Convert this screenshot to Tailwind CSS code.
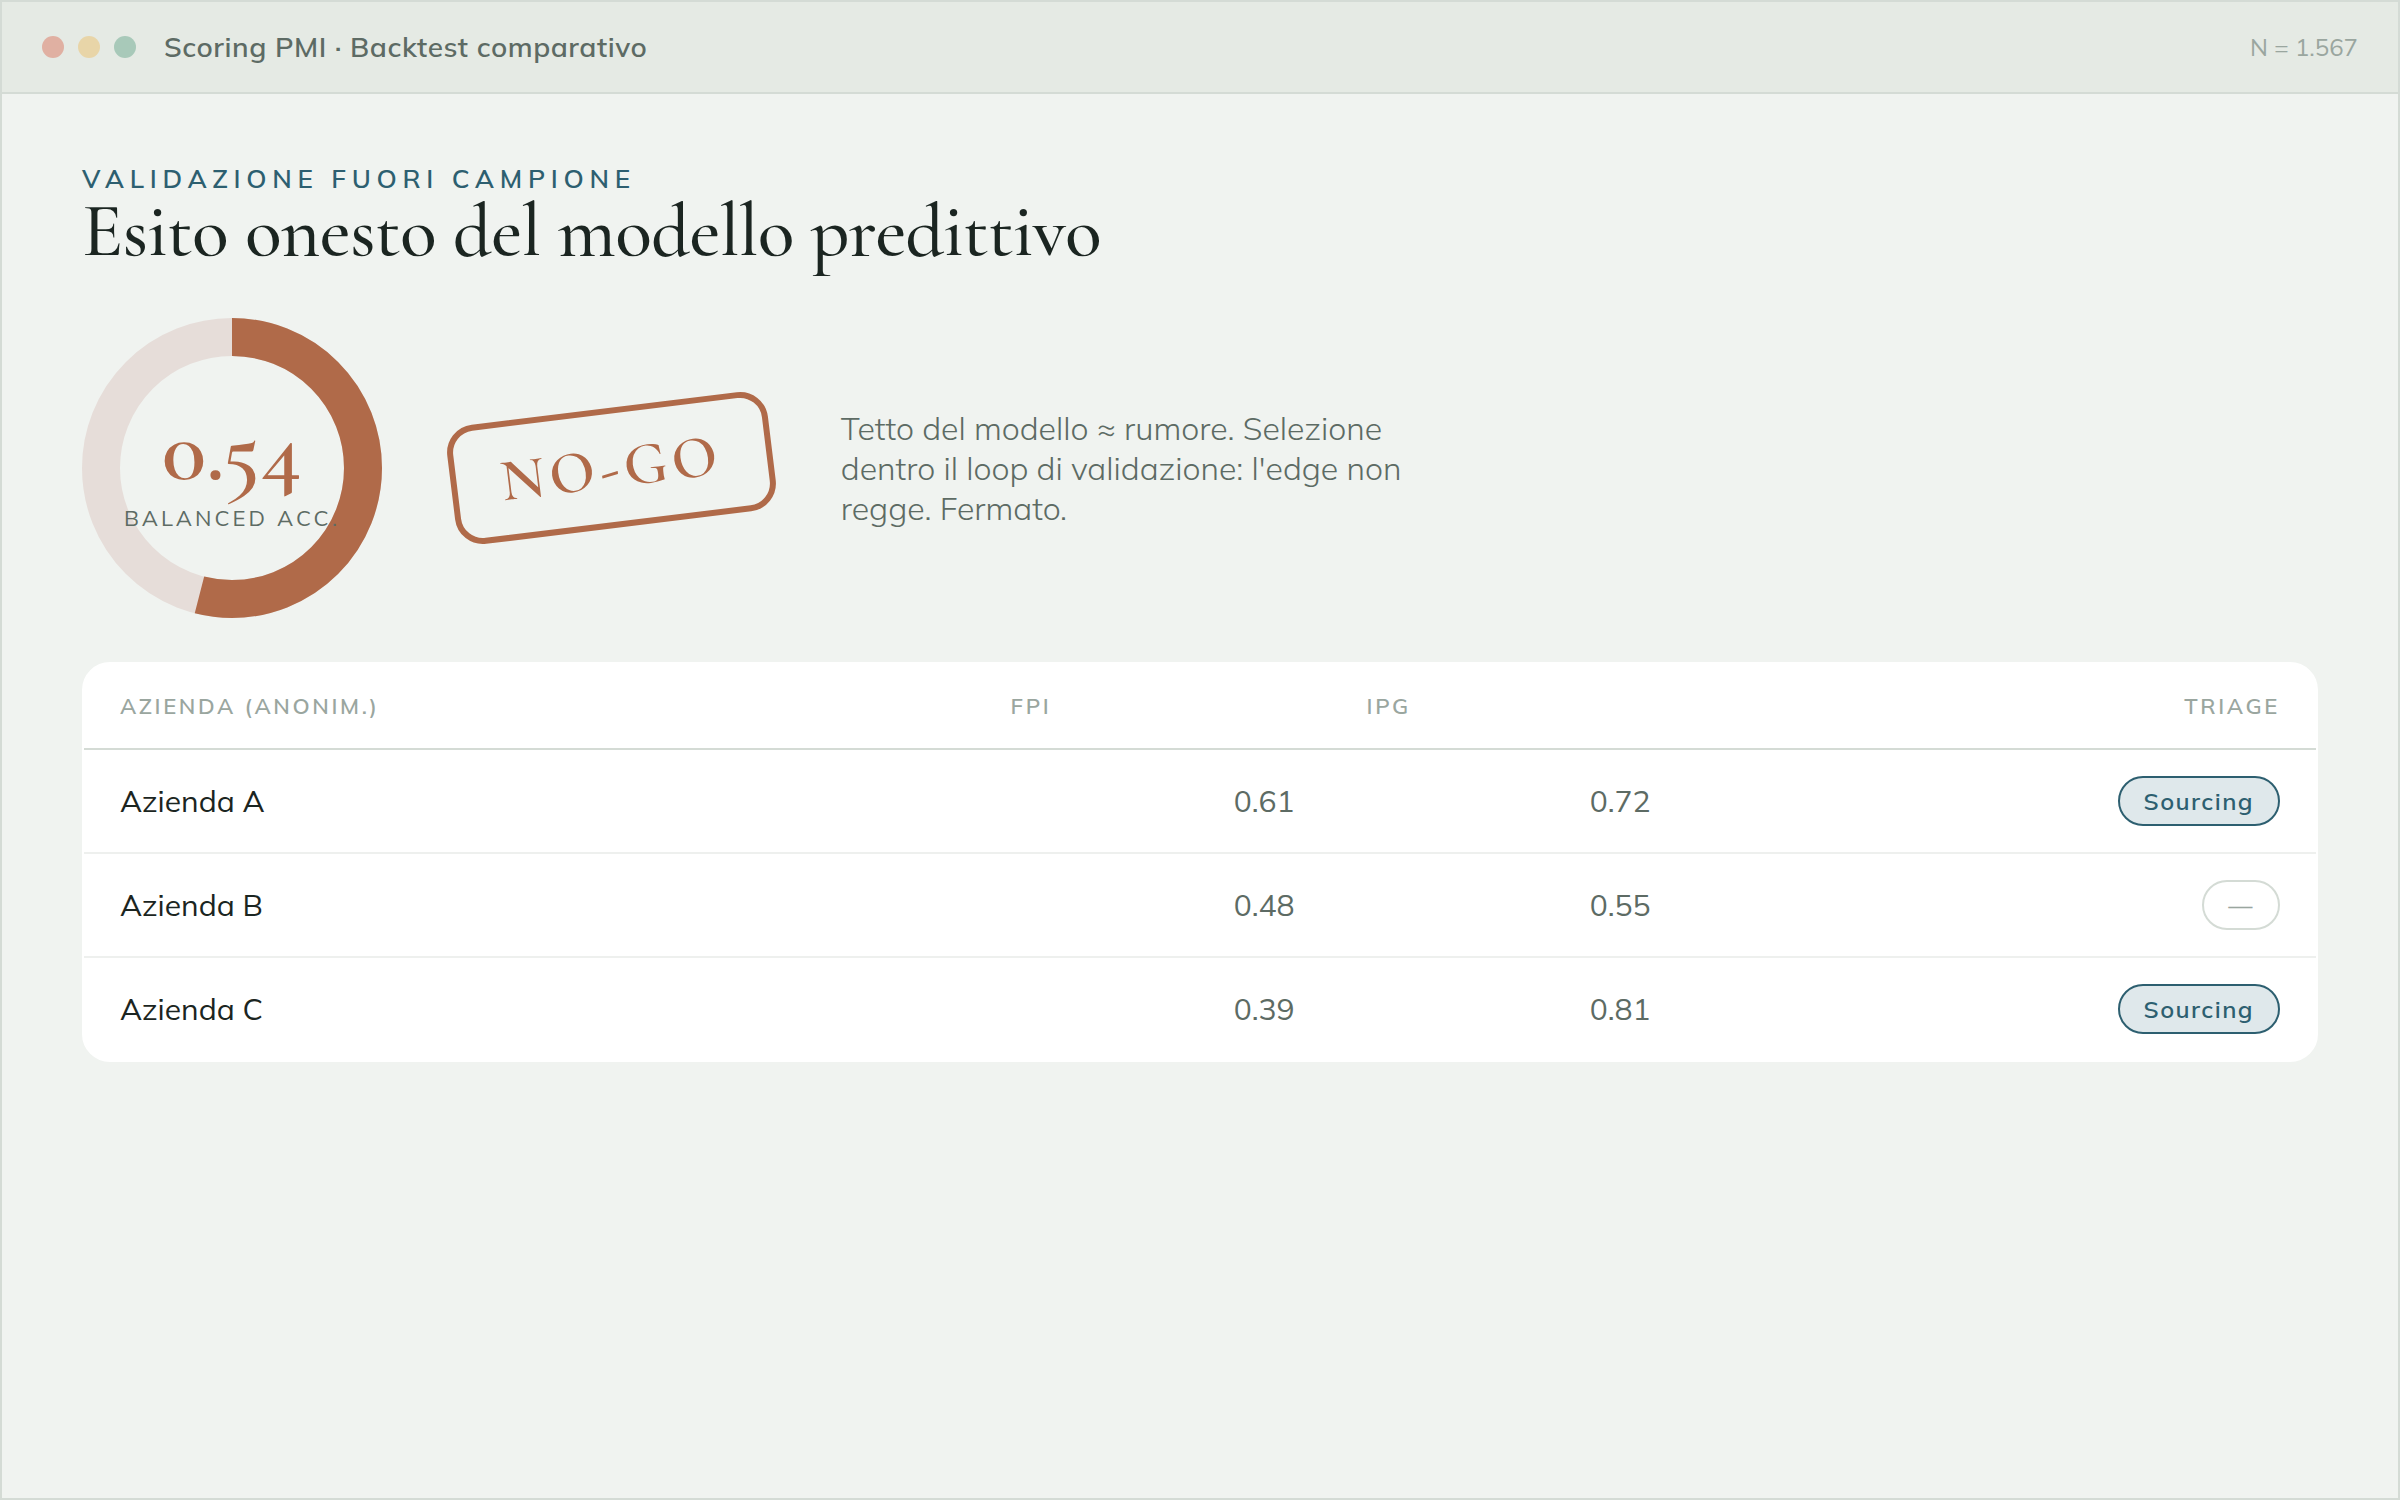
<!DOCTYPE html>
<html lang="it">
<head>
<meta charset="utf-8">
<meta name="viewport" content="width=device-width, initial-scale=1">
<title>Scoring PMI · Backtest comparativo</title>
<script src="https://cdn.jsdelivr.net/npm/@tailwindcss/browser@4"></script>
</head>
<body class="flex min-h-screen flex-col border-2 border-[#d4dbd5] bg-[#f0f3f0] font-['Mulish','Nunito','Open_Sans',sans-serif] text-[#1b2521]">
  <header class="flex h-[92px] shrink-0 items-center border-b-2 border-[#d4dbd5] bg-[#e5eae4] px-10">
    <div class="flex gap-[14px]" aria-hidden="true">
      <span class="size-[22px] rounded-full bg-[#e0b0a2]"></span>
      <span class="size-[22px] rounded-full bg-[#e8d5a8]"></span>
      <span class="size-[22px] rounded-full bg-[#a8c9b9]"></span>
    </div>
    <p class="ml-7 text-[28px] leading-9 font-semibold tracking-[0.02em] text-[#5d6b64]">Scoring PMI · Backtest comparativo</p>
    <p class="ml-auto text-2xl text-[#9aa69f]">N = 1.567</p>
  </header>

  <main class="px-20 pt-[69px]">
    <p class="text-[26px] leading-8 font-semibold tracking-[0.22em] text-[#2d5f70] uppercase">Validazione fuori campione</p>
    <h1 class="font-['Cormorant_Garamond','Liberation_Serif',serif] text-[76px] leading-[72px] font-medium tracking-[-0.01em]">Esito onesto del modello predittivo</h1>

    <section class="mt-[51px] flex items-center gap-[68px]">
      <div class="relative size-[300px] shrink-0">
        <svg class="size-full" viewBox="0 0 300 300" aria-hidden="true">
          <circle cx="150" cy="150" r="131" fill="none" stroke="#e6ddd9" stroke-width="38"/>
          <circle cx="150" cy="150" r="131" fill="none" stroke="#b06a49" stroke-width="38" pathLength="100" stroke-dasharray="54 46" transform="rotate(-90 150 150)"/>
        </svg>
        <div class="absolute inset-0 flex flex-col items-center justify-center whitespace-nowrap">
          <span class="font-['Cormorant_Garamond','Liberation_Serif',serif] text-[92px] leading-[92px] font-semibold text-[#b06a49]">0.54</span>
          <span class="mt-2 text-[22px] leading-7 tracking-[0.14em] text-[#5d6b64] uppercase">Balanced acc.</span>
        </div>
      </div>
      <div class="flex h-[120px] shrink-0 -rotate-7 items-center rounded-[28px] border-6 border-[#b06a49] px-11 font-['Cormorant_Garamond','Liberation_Serif',serif] text-[60px] font-semibold tracking-[0.08em] text-[#b06a49]">NO-GO</div>
      <p class="max-w-[600px] text-[32px] leading-10 font-light text-[#5d6b64]">Tetto del modello ≈ rumore. Selezione dentro il loop di validazione: l'edge non regge. Fermato.</p>
    </section>

    <div class="mt-11 rounded-[28px] border-2 border-white bg-white">
      <table class="w-full table-fixed border-separate border-spacing-0 text-left text-3xl">
        <colgroup>
          <col class="w-[39.9%]">
          <col class="w-[15.95%]">
          <col class="w-[15.95%]">
          <col>
        </colgroup>
        <thead class="text-[22px] text-[#9aa69f] uppercase">
          <tr class="h-[86px] *:border-b-2 *:border-[#d4dbd5] *:px-9 *:font-semibold *:tracking-[0.12em]">
            <th scope="col">Azienda (anonim.)</th>
            <th scope="col">FPI</th>
            <th scope="col">IPG</th>
            <th scope="col" class="text-right">Triage</th>
          </tr>
        </thead>
        <tbody>
          <tr class="h-[104px] *:border-b-2 *:border-[#eef0ee] *:px-9">
            <td>Azienda A</td>
            <td class="text-right text-[#5d6b64] tabular-nums">0.61</td>
            <td class="text-right text-[#5d6b64] tabular-nums">0.72</td>
            <td><span class="ml-auto flex h-[50px] w-fit items-center rounded-full border-2 border-[#2d5f70] bg-[#dfe8eb] px-6 text-2xl font-semibold tracking-[0.06em] text-[#2d5f70]">Sourcing</span></td>
          </tr>
          <tr class="h-[104px] *:border-b-2 *:border-[#eef0ee] *:px-9">
            <td>Azienda B</td>
            <td class="text-right text-[#5d6b64] tabular-nums">0.48</td>
            <td class="text-right text-[#5d6b64] tabular-nums">0.55</td>
            <td><span class="ml-auto flex h-[50px] w-fit items-center rounded-full border-2 border-[#d4dbd5] px-6 text-2xl font-semibold tracking-[0.06em] text-[#9aa69f]">—</span></td>
          </tr>
          <tr class="h-[102px] *:px-9">
            <td>Azienda C</td>
            <td class="text-right text-[#5d6b64] tabular-nums">0.39</td>
            <td class="text-right text-[#5d6b64] tabular-nums">0.81</td>
            <td><span class="ml-auto flex h-[50px] w-fit items-center rounded-full border-2 border-[#2d5f70] bg-[#dfe8eb] px-6 text-2xl font-semibold tracking-[0.06em] text-[#2d5f70]">Sourcing</span></td>
          </tr>
        </tbody>
      </table>
    </div>
  </main>
</body>
</html>
